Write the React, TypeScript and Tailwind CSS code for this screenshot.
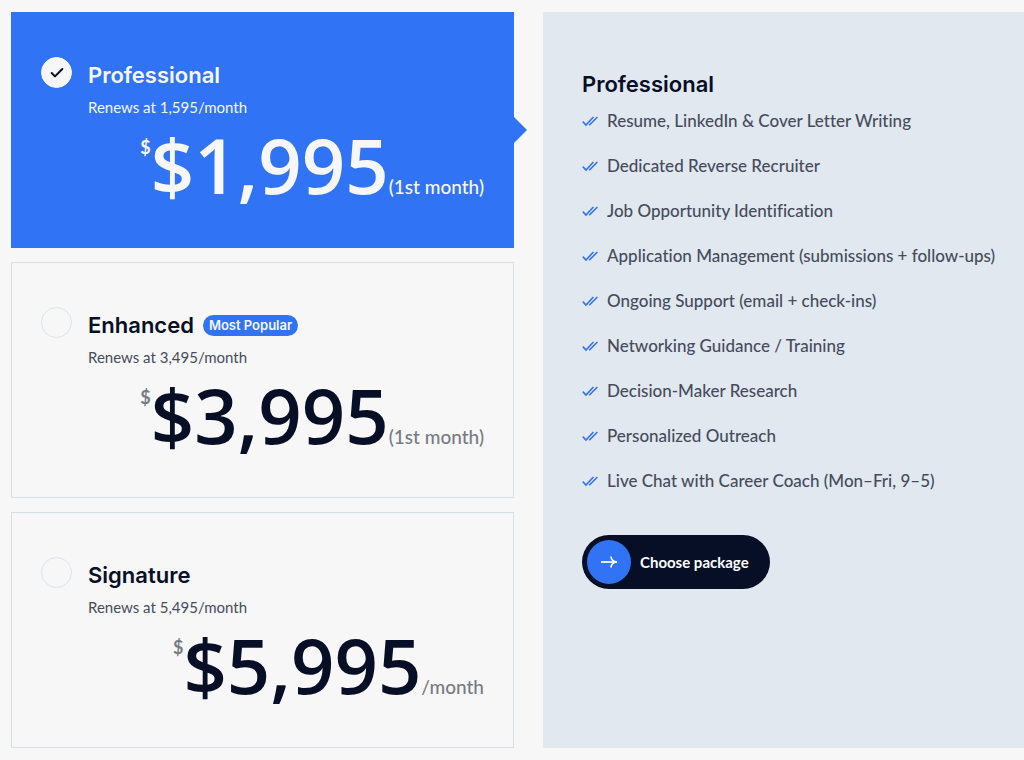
import React, { useState } from 'react';
import { Check } from 'lucide-react';

const plans = [
  { id: 'professional', name: 'Professional', renews: 'Renews at 1,595/month', price: '$1,995', period: '(1st month)', popular: false },
  { id: 'enhanced', name: 'Enhanced', renews: 'Renews at 3,495/month', price: '$3,995', period: '(1st month)', popular: true },
  { id: 'signature', name: 'Signature', renews: 'Renews at 5,495/month', price: '$5,995', period: '/month', popular: false }
];

const features = [
  'Resume, LinkedIn & Cover Letter Writing',
  'Dedicated Reverse Recruiter',
  'Job Opportunity Identification',
  'Application Management (submissions + follow-ups)',
  'Ongoing Support (email + check-ins)',
  'Networking Guidance / Training',
  'Decision-Maker Research',
  'Personalized Outreach',
  'Live Chat with Career Coach (Mon–Fri, 9–5)'
];

function DoubleCheck() {
  return (
    <svg className="w-4 h-4 shrink-0 text-[#3173f5]" viewBox="0 0 16 16" fill="none" stroke="currentColor" strokeWidth="1.6" aria-hidden="true">
      <path d="M0.8 8.6 L4 12 L11.4 4" />
      <path d="M7.2 12.2 L15.4 4" />
    </svg>
  );
}

function ArrowIcon() {
  return (
    <svg className="w-5 h-5" viewBox="0 0 20 20" fill="none" stroke="currentColor" strokeWidth="1.7" aria-hidden="true">
      <path d="M2 10 H18" />
      <path d="M12 4.5 C12 7.5 14.5 10 18 10 C14.5 10 12 12.5 12 15.5" />
    </svg>
  );
}

export default function App() {
  const [selected, setSelected] = useState('professional');
  const current = plans.find((plan) => plan.id === selected) ?? plans[0];

  return (
    <main className="min-h-screen bg-[#f7f7f7] py-3 pl-[11px] grid grid-cols-[503fr_481fr] gap-[29px] font-['Lato',sans-serif] text-[#060f26]">
      {/* PLAN CARDS */}
      <div className="min-w-0 flex flex-col gap-[14px]" role="radiogroup" aria-label="Packages">
        {plans.map((plan) => {
          const active = plan.id === selected;
          return (
            <label
              key={plan.id}
              htmlFor={plan.id}
              className={`relative block border px-[29px] pt-11 pb-[38px] cursor-pointer ${
                active ? 'bg-[#3173f5] border-[#3173f5] text-[#f7f7f7]' : 'border-[#d8e0e4]'
              }`}
            >
              <div className="flex items-start gap-4">
                <span className="relative flex shrink-0">
                  <input
                    type="radio"
                    id={plan.id}
                    name="plan"
                    checked={active}
                    onChange={() => setSelected(plan.id)}
                    className="appearance-none w-[31px] h-[31px] rounded-full border border-[#dce3e8] checked:bg-[#f7f7f7] checked:border-[#f7f7f7]"
                  />
                  {active && <Check className="absolute inset-0 m-auto w-4 h-4 text-[#060f26]" strokeWidth={3} />}
                </span>
                <div className="pt-1">
                  <div className="flex items-center gap-[9px]">
                    <h2 className="font-['Inter',sans-serif] font-semibold text-[22px] leading-7">{plan.name}</h2>
                    {plan.popular && (
                      <span className="bg-[#3173f5] text-[#f7f7f7] rounded-full px-[6px] font-['Inter',sans-serif] font-semibold text-[13px] leading-[21px]">
                        Most Popular
                      </span>
                    )}
                  </div>
                  <p className={`mt-1 text-[15px] leading-7 ${active ? '' : 'text-[#464c5c]'}`}>{plan.renews}</p>
                </div>
              </div>

              <div className="flex justify-end items-baseline">
                <span className={`self-start pt-3.5 font-bold text-lg leading-6 ${active ? '' : 'text-[#777b84]'}`}>$</span>
                <span className="font-['Open_Sans',sans-serif] font-semibold text-[76px] leading-[88px]">{plan.price}</span>
                <span className={`font-medium text-[19px] leading-6 ${active ? '' : 'text-[#777b84]'}`}>{plan.period}</span>
              </div>

              {active && (
                <svg className="absolute left-full top-1/2 -translate-y-1/2 w-[14px] h-7 text-[#3173f5]" viewBox="0 0 14 28" aria-hidden="true">
                  <path d="M0 0 L14 14 L0 28 Z" fill="currentColor" />
                </svg>
              )}
            </label>
          );
        })}
      </div>

      {/* PACKAGE DETAILS */}
      <section className="min-w-0 bg-[#e1e8f0] pl-[39px] pt-[58px]">
        <h2 className="font-['Inter',sans-serif] font-semibold text-[22px] leading-7">{current.name}</h2>
        <ul className="mt-[9px] flex flex-col gap-[17px] text-[#464c5c] [font-variant-ligatures:none]">
          {features.map((feature) => (
            <li key={feature} className="flex items-center gap-[9px] font-medium text-[17px] leading-7 whitespace-nowrap">
              <DoubleCheck />
              {feature}
            </li>
          ))}
        </ul>
        <button type="button" className="mt-10 flex items-center gap-[9px] rounded-full bg-[#060f26] text-white p-[5px] pr-[21px] font-bold text-[15px] leading-6 cursor-pointer">
          <span className="w-11 h-11 rounded-full bg-[#3173f5] flex items-center justify-center">
            <ArrowIcon />
          </span>
          Choose package
        </button>
      </section>
    </main>
  );
}
